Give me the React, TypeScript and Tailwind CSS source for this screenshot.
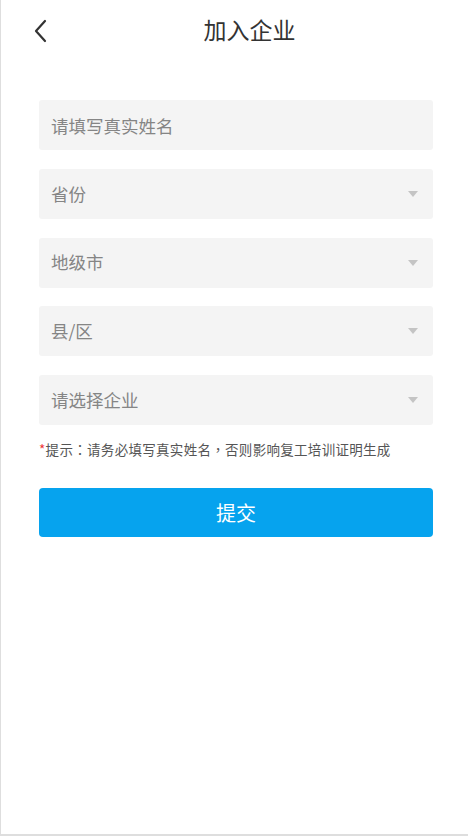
import React, { useState } from 'react';

const font = { fontFamily: '"Noto Sans CJK SC", "Noto Sans", sans-serif' };
const punct = { fontFamily: '"Noto Sans CJK TC", sans-serif' };

interface SelectRowProps {
  placeholder: string;
}

const SelectRow: React.FC<SelectRowProps> = ({ placeholder }) => (
  <div className="flex h-[50px] items-center justify-between rounded-[3px] bg-[#f4f4f4] pl-[12px] pr-[15px]">
    <span className="text-[17.5px] text-[#858585]">{placeholder}</span>
    <span className="h-0 w-0 border-x-[5px] border-t-[6px] border-x-transparent border-t-[#c4c4c4]" />
  </div>
);

const App: React.FC = () => {
  const [name, setName] = useState('');

  return (
    <div
      className="min-h-[836px] border-l border-b-2 border-[#dedede] bg-white"
      style={font}
    >
      {/* Header */}
      <div className="relative flex h-[58px] items-center justify-center">
        <button className="absolute left-[30px] top-[18px] text-[#333]">
          <svg width="18" height="26" viewBox="0 0 18 26" fill="none">
            <path d="M14 3 L5 13 L14 23" stroke="#333" strokeWidth="2.2" strokeLinecap="round" strokeLinejoin="round" />
          </svg>
        </button>
        <h1 className="ml-[30px] text-[23px] text-[#333]">加入企业</h1>
      </div>

      {/* Form */}
      <div className="ml-[38px] mr-[35px] mt-[42px] flex flex-col gap-[18.75px]">
        <input
          value={name}
          onChange={(e) => setName(e.target.value)}
          placeholder="请填写真实姓名"
          className="h-[50px] rounded-[3px] bg-[#f4f4f4] px-[12px] text-[17.5px] text-[#333] outline-none placeholder:text-[#858585]"
        />
        <SelectRow placeholder="省份" />
        <SelectRow placeholder="地级市" />
        <SelectRow placeholder="县/区" />
        <SelectRow placeholder="请选择企业" />
      </div>

      <p className="ml-[38px] mr-[35px] mt-[14px] text-[13.5px] tracking-[0.3px] text-[#555]">
        <span className="text-[#e33]">*</span>提示<span style={punct}>：</span>请务必填写真实姓名<span style={punct}>，</span>否则影响复工培训证明生成
      </p>

      <div className="ml-[38px] mr-[35px] mt-[29px]">
        <button className="h-[49px] w-full rounded-[4px] bg-[#06a3ee] text-[20px] text-white">
          提交
        </button>
      </div>
    </div>
  );
};

export default App;
